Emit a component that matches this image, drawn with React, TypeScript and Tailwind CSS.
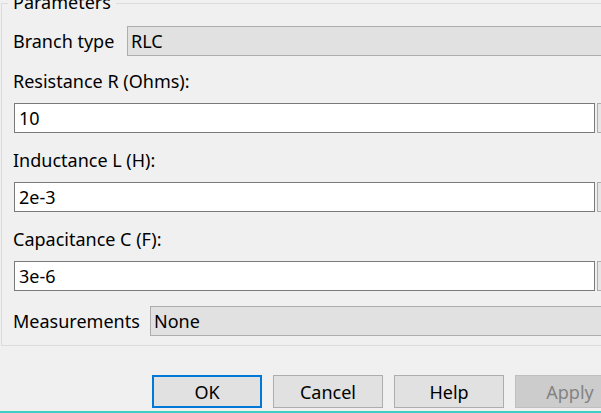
const fields = [
  { label: 'Resistance R (Ohms):', value: '10' },
  { label: 'Inductance L (H):', value: '2e-3' },
  { label: 'Capacitance C (F):', value: '3e-6' },
];

const Combo = ({ value, left }: { value: string; left: string }) => (
  <div className={`h-[30px] ${left} flex-1 border border-[#adadad] bg-[#e1e1e1] pl-[3px] flex items-center`}>
    {value}
  </div>
);

const FieldRow = ({ label, value }: { label: string; value: string }) => (
  <>
    <div className="mt-[15px] h-[24px] leading-[24px] first:mt-[13px]">{label}</div>
    <div className="mt-[10px] flex items-stretch">
      <div className="ml-[1px] h-[30px] w-[581px] border border-[#7a7a7a] bg-white pl-[4px] flex items-center">
        {value}
      </div>
      <div className="ml-[2px] h-[30px] w-[30px] border border-[#adadad] bg-[#e6e6e6]" />
    </div>
  </>
);

const Button = ({ text, kind }: { text: string; kind?: 'default' | 'disabled' }) => {
  let cls = 'border border-[#adadad] bg-[#e1e1e1] text-black';
  if (kind === 'default') cls = 'border-2 border-[#0078d7] bg-[#e1e1e1] text-black';
  if (kind === 'disabled') cls = 'border border-[#bfbfbf] bg-[#cccccc] text-[#838383]';
  return (
    <div className={`h-[33px] w-[110px] shrink-0 flex items-center justify-center ${cls}`}>{text}</div>
  );
};

export default function App() {
  return (
    <div
      className="w-[601px] h-[413px] overflow-hidden bg-[#f0f0f0] text-[18px] leading-[24px] text-black flex flex-col"
      style={{ fontFamily: '"Noto Sans", "Open Sans", sans-serif' }}
    >
      <div className="relative mt-[3px] ml-[1px] h-[343px] w-[640px] shrink-0 border border-[#dcdcdc] pl-[11px] pt-[22px]">
        <div className="absolute left-[6px] top-[-14px] bg-[#f0f0f0] px-[5px] h-[24px]">Parameters</div>

        <div className="flex items-center">
          <span className="w-[114px] shrink-0">Branch type</span>
          <Combo value="RLC" left="" />
        </div>

        <div className="flex flex-col">
          {fields.map((f, i) => (
            <div key={f.label} className="flex flex-col">
              <div className={`${i === 0 ? 'mt-[13px]' : 'mt-[15px]'} h-[24px]`}>{f.label}</div>
              <div className="mt-[10px] flex">
                <div className="ml-[1px] h-[30px] w-[581px] shrink-0 border border-[#7a7a7a] bg-white pl-[4px] flex items-center">
                  {f.value}
                </div>
                <div className="ml-[2px] h-[30px] w-[30px] shrink-0 border border-[#adadad] bg-[#e6e6e6]" />
              </div>
            </div>
          ))}
        </div>

        <div className="mt-[15px] flex items-center">
          <span className="w-[137px] shrink-0">Measurements</span>
          <Combo value="None" left="" />
        </div>
      </div>

      <div className="mt-[29px] ml-[152px] flex gap-[11px]">
        <Button text="OK" kind="default" />
        <Button text="Cancel" />
        <Button text="Help" />
        <Button text="Apply" kind="disabled" />
      </div>

      <div className="mt-auto h-[2px] w-full bg-[#3fcfc4]" />
    </div>
  );
}

void FieldRow;
